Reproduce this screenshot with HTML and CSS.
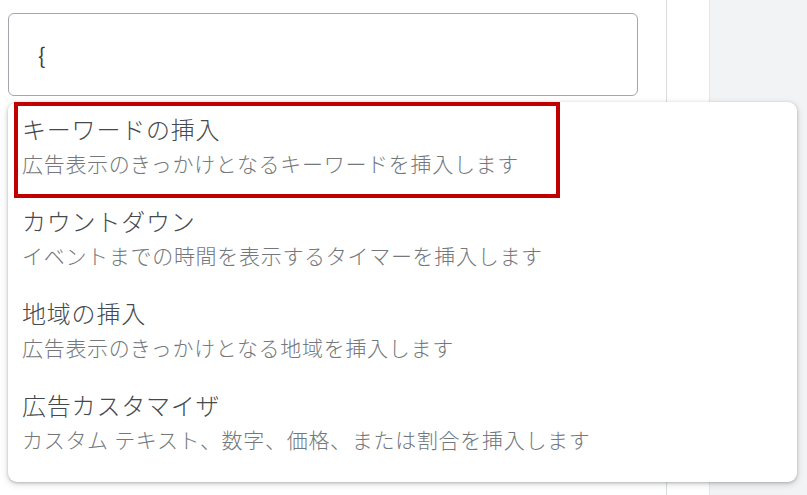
FILE: index.html
```html
<!DOCTYPE html>
<html lang="ja">
<head>
<meta charset="UTF-8">
<meta name="viewport" content="width=device-width, initial-scale=1.0">
<title>広告文の挿入</title>
<link rel="stylesheet" href="styles.css">
</head>
<body>

<div class="page">
  <div class="editor">
    <div class="text-field">
      <span class="typed">{</span>
    </div>
  </div>
  <div class="spacer"></div>
  <div class="side-panel"></div>

  <!-- insert menu opened by typing "{" -->
  <div class="insert-menu">
    <div class="highlight"></div>
    <div class="menu-item">
      <div class="item-title">キーワードの挿入</div>
      <div class="item-desc">広告表示のきっかけとなるキーワードを挿入します</div>
    </div>
    <div class="menu-item">
      <div class="item-title">カウントダウン</div>
      <div class="item-desc">イベントまでの時間を表示するタイマーを挿入します</div>
    </div>
    <div class="menu-item">
      <div class="item-title">地域の挿入</div>
      <div class="item-desc">広告表示のきっかけとなる地域を挿入します</div>
    </div>
    <div class="menu-item">
      <div class="item-title">広告カスタマイザ</div>
      <div class="item-desc">カスタム テキスト、数字、価格、または割合を挿入します</div>
    </div>
  </div>
</div>

</body>
</html>
```

FILE: styles.css
```css
body {
  margin: 0;
  padding: 0;
  background-color: #fff;
  font-family: "Noto Sans CJK JP", "Noto Sans", sans-serif;
  color: #3c4043;
}
.page {
  position: relative;
  display: flex;
  width: 807px;
  height: 495px;
  overflow: hidden;
}
.editor {
  width: 667px;
  border-right: 1px solid #dadce0;
  padding: 13px 0 0 8px;
  box-sizing: border-box;
}
.text-field {
  width: 630px;
  height: 83px;
  border: 1.5px solid #a3a7ab;
  border-radius: 6px;
  box-sizing: border-box;
  padding: 0 0 0 29px;
  display: flex;
  align-items: center;
}
.typed {
  font-size: 22px;
  color: #3c4043;
  margin-top: -2px;
}
.spacer {
  width: 42px;
}
.side-panel {
  flex: 1;
  background-color: #f1f3f4;
  border-left: 1px solid #e3e5e7;
}
.insert-menu {
  position: absolute;
  left: 8px;
  top: 102px;
  width: 789px;
  height: 380px;
  background-color: #fff;
  border-radius: 9px;
  box-shadow: 0 1px 3px rgba(60, 64, 67, 0.3), 0 2px 6px 1px rgba(60, 64, 67, 0.15);
}
.highlight {
  position: absolute;
  left: 6px;
  top: 0;
  width: 546px;
  height: 96px;
  border: 4px solid #c00000;
  box-sizing: border-box;
}
.menu-item {
  height: 92px;
  padding: 11px 0 0 14px;
  box-sizing: border-box;
}
.item-title {
  font-size: 24px;
  font-weight: 300;
  line-height: 32px;
  letter-spacing: 0.8px;
  color: #45494d;
}
.item-desc {
  margin-top: 3px;
  font-size: 21px;
  font-weight: 300;
  line-height: 30px;
  letter-spacing: 0.7px;
  color: #74787c;
}
```
